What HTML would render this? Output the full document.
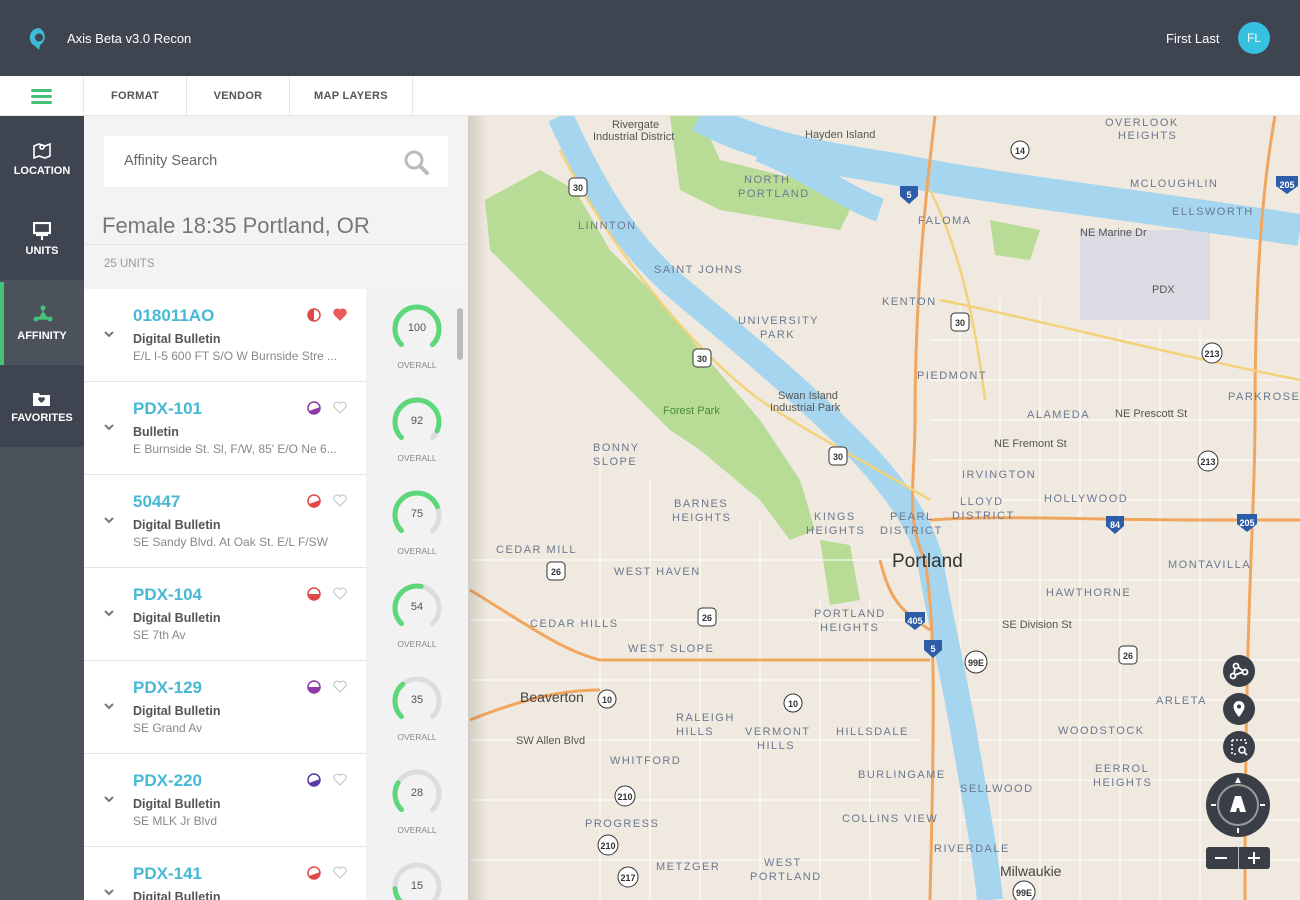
<!DOCTYPE html>
<html style="height:900px;overflow:hidden"><head><meta charset="utf-8"><style>
*{box-sizing:border-box;margin:0;padding:0}
body{width:1300px;height:900px;overflow:hidden;font-family:"Liberation Sans",sans-serif;background:#efe9df;position:relative}
.hdr{position:absolute;left:0;top:0;width:1300px;height:76px;background:#3f4550;color:#fff}
.tabs{position:absolute;left:0;top:76px;width:1300px;height:40px;background:#fff;border-bottom:1px solid #e4e4e4}
.tab{position:absolute;top:0;height:40px;border-right:1px solid #e6e6e6;font-size:11px;font-weight:bold;color:#555;line-height:40px;text-align:center;letter-spacing:.3px}
.side{position:absolute;left:0;top:116px;width:84px;height:784px;background:#4c525c;overflow:hidden}
.nav{position:absolute;left:0;width:84px;height:82px;background:#3f4550;color:#fff;font-size:11px;font-weight:bold;text-align:center}
.nav span{position:absolute;left:0;width:84px;top:49px}
.panel{position:absolute;left:84px;top:116px;width:384px;height:784px;background:#f3f3f3;overflow:hidden}
.item{position:absolute;left:0;width:384px;height:93px;background:#fff;border-bottom:1px solid #e5e5e5}
.item .sc{position:absolute;left:282px;top:0;width:102px;height:93px;background:#f2f2f2}
.id{position:absolute;left:49px;top:17px;font-size:17px;color:#45b9d4;font-weight:bold}
.ty{position:absolute;left:49px;top:43px;font-size:12.5px;color:#555;font-weight:bold}
.ad{position:absolute;left:49px;top:60px;font-size:12px;color:#888;white-space:nowrap}
.chev{position:absolute;left:20px;top:42px}
.ov{position:absolute;left:0;width:102px;top:71px;text-align:center;font-size:8.5px;color:#888}
.num{position:absolute;left:0;width:102px;top:33px;text-align:center;font-size:11px;color:#555}
.ring{position:absolute;left:25px;top:14px}
.lbl{font-family:"Liberation Sans",sans-serif;fill:#6b7890;font-size:11px;letter-spacing:1.5px}
.btn{position:absolute;width:32px;height:32px;border-radius:50%;background:#3a3f47}
</style></head><body>
<div class="hdr">
 <svg style="position:absolute;left:28px;top:27px" width="22" height="24" viewBox="0 0 22 24"><path d="M11 1a9.5 9.5 0 0 0-4 18l4 4 1-5A9.5 9.5 0 0 0 11 1z" fill="#3bbbd8"/><circle cx="11" cy="10.5" r="4" fill="#3f4550"/></svg>
 <div style="position:absolute;left:67px;top:31px;font-size:13px">Axis Beta v3.0 Recon</div>
 <div style="position:absolute;left:1166px;top:31px;font-size:13px">First Last</div>
 <div style="position:absolute;left:1238px;top:22px;width:32px;height:32px;border-radius:50%;background:#36c1e0;font-size:12px;line-height:32px;text-align:center">FL</div>
</div>
<div class="tabs">
 <div class="tab" style="left:0;width:84px"><div style="position:absolute;left:31px;top:13px;width:21px;height:3px;background:#45c27a;box-shadow:0 6px 0 #45c27a,0 12px 0 #45c27a;border-radius:2px"></div></div>
 <div class="tab" style="left:84px;width:103px">FORMAT</div>
 <div class="tab" style="left:187px;width:103px">VENDOR</div>
 <div class="tab" style="left:290px;width:123px">MAP LAYERS</div>
</div>
<div class="side">
 <div class="nav" style="top:0;height:82px"><svg style="position:absolute;left:33px;top:26px" width="18" height="17" viewBox="0 0 18 17" fill="none" stroke="#fff" stroke-width="1.6"><path d="M1 4l5-2 6 2 5-2v12l-5 2-6-2-5 2z"/><circle cx="9" cy="5" r="2"/></svg><span>LOCATION</span></div>
 <div class="nav" style="top:82px;height:82px"><svg style="position:absolute;left:33px;top:24px" width="18" height="18" viewBox="0 0 18 18"><rect x="1" y="1" width="16" height="10" fill="none" stroke="#fff" stroke-width="2.2"/><rect x="3" y="12" width="12" height="2" fill="#fff"/><rect x="8" y="13" width="2" height="5" fill="#fff"/></svg><span style="top:47px">UNITS</span></div>
 <div class="nav" style="top:166px;height:83px;background:#4c525c;border-left:4px solid #45c27a"><svg style="position:absolute;left:29px;top:23px" width="20" height="18" viewBox="0 0 20 18" fill="#45c27a"><circle cx="10" cy="3" r="2.5"/><circle cx="10" cy="10" r="2.5"/><circle cx="3" cy="14" r="2.5"/><circle cx="17" cy="14" r="2.5"/><path d="M10 3v7M3 14l7-4 7 4M3 14h14" stroke="#45c27a" stroke-width="1.3"/></svg><span style="left:-4px;top:48px">AFFINITY</span></div>
 <div class="nav" style="top:249px;height:82px"><svg style="position:absolute;left:33px;top:26px" width="17" height="15" viewBox="0 0 17 15"><path d="M0 2h6l1 2h10v11H0z" fill="#fff"/><path d="M8.5 12l-3-3a1.5 1.5 0 0 1 3-2 1.5 1.5 0 0 1 3 2z" fill="#3f4550"/></svg><span style="top:47px">FAVORITES</span></div>
</div>
<div class="panel">
 <div style="position:absolute;left:20px;top:20px;width:344px;height:51px;background:#fff"><div style="position:absolute;left:20px;top:17px;font-size:14.5px;color:#666">Affinity Search</div>
 <svg style="position:absolute;left:300px;top:14px" width="26" height="26" viewBox="0 0 26 26"><circle cx="10" cy="10" r="8" fill="none" stroke="#bbb" stroke-width="3"/><path d="M16 16l7 7" stroke="#bbb" stroke-width="4" stroke-linecap="round"/></svg></div>
 <div style="position:absolute;left:18px;top:97px;font-size:22px;color:#777">Female 18:35 Portland, OR</div>
 <div style="position:absolute;left:0;top:128px;width:384px;border-top:1px solid #e2e2e2"></div>
 <div style="position:absolute;left:20px;top:142px;font-size:11.5px;color:#999">25 UNITS</div>
 <div id="list"></div>
 <div style="position:absolute;left:373px;top:192px;width:6px;height:52px;border-radius:3px;background:#bbb"></div>
</div>
<svg style="position:absolute;left:468px;top:116px" width="832" height="784" viewBox="468 116 832 784">
 <rect x="468" y="116" width="832" height="784" fill="#efe9df"/>
 <defs><linearGradient id="sh" x1="0" x2="1"><stop offset="0" stop-color="#000" stop-opacity=".12"/><stop offset="1" stop-color="#000" stop-opacity="0"/></linearGradient></defs>
 <path d="M485 200 L540 170 L575 190 L610 250 L660 300 L700 350 L760 420 L800 480 L815 530 L790 540 L760 500 L700 450 L670 430 L640 400 L600 360 L560 320 L520 280 L490 250z" fill="#b8dc95"/>
 <path d="M670 116 L700 116 L720 160 L800 180 L860 190 L840 230 L780 220 L720 210 L680 190z" fill="#b8dc95"/>
 <path d="M990 220 L1040 230 L1030 260 L995 255z" fill="#b8dc95"/>
 <path d="M820 540 L850 545 L860 600 L830 605z" fill="#b8dc95"/>
 <rect x="1080" y="230" width="130" height="90" fill="#dcdbe3"/>
 <g stroke="#fff" stroke-width="1.5" opacity=".7">
  <path d="M960 300V900M1000 300V900M1040 300V900M1080 330V900M1120 330V900M1160 330V900M1200 330V900M600 450V900M650 480V900M700 500V900M760 520V900M820 600V900M870 600V900"/>
  <path d="M930 340H1300M930 380H1300M930 420H1300M930 460H1300M960 500H1300M960 580H1300M960 620H1300M960 660H1300M960 700H1300M960 740H1300M960 780H1300M960 820H1300M960 860H1300M470 560H920M470 620H920M470 680H920M470 740H920M470 800H920M470 860H920"/>
 </g>
 <path d="M560 116 C590 180 620 240 680 290 C740 340 800 390 850 440 C890 480 920 520 930 560 C940 620 955 680 965 740 C975 800 985 850 990 900" fill="none" stroke="#a6d6ef" stroke-width="26"/>
 <path d="M700 116 C760 150 840 160 900 170 C1000 190 1100 200 1300 230" fill="none" stroke="#a6d6ef" stroke-width="32"/>
 <path d="M760 150 C810 170 850 200 880 210" fill="none" stroke="#a6d6ef" stroke-width="24"/>
 <g fill="none" stroke="#f1a660" stroke-width="3">
  <path d="M935 116 C925 200 915 300 915 420 C915 480 905 520 925 560 C935 620 935 700 930 900"/>
  <path d="M1275 116 C1260 200 1255 300 1255 420 C1255 520 1245 600 1245 900"/>
  <path d="M930 520 C1000 515 1100 520 1200 520 L1300 520"/>
  <path d="M880 560 C890 600 900 610 930 630"/>
  <path d="M470 590 C520 620 560 650 600 660 L930 660"/>
  <path d="M470 720 C520 700 560 690 600 690"/>
 </g>
 <g fill="none" stroke="#f3d27a" stroke-width="2.5">
  <path d="M560 150 C600 230 680 340 760 400 C820 440 880 470 930 500"/>
  <path d="M940 300 C1040 320 1150 350 1300 380"/>
  <path d="M930 190 C960 250 975 320 985 400"/>
 </g>
 <path d="M468 116h20v784h-20z" fill="url(#sh)"/>
 <g class="lbl">
  <text x="744" y="183">NORTH</text><text x="738" y="197">PORTLAND</text>
  <text x="578" y="229">LINNTON</text><text x="654" y="273">SAINT JOHNS</text>
  <text x="738" y="324">UNIVERSITY</text><text x="760" y="338">PARK</text>
  <text x="882" y="305">KENTON</text><text x="918" y="224">FALOMA</text>
  <text x="917" y="379">PIEDMONT</text><text x="1027" y="418">ALAMEDA</text>
  <text x="962" y="478">IRVINGTON</text><text x="1044" y="502">HOLLYWOOD</text>
  <text x="593" y="451">BONNY</text><text x="593" y="465">SLOPE</text>
  <text x="674" y="507">BARNES</text><text x="672" y="521">HEIGHTS</text>
  <text x="814" y="520">KINGS</text><text x="806" y="534">HEIGHTS</text>
  <text x="890" y="520">PEARL</text><text x="880" y="534">DISTRICT</text>
  <text x="960" y="505">LLOYD</text><text x="952" y="519">DISTRICT</text>
  <text x="496" y="553">CEDAR MILL</text><text x="614" y="575">WEST HAVEN</text>
  <text x="530" y="627">CEDAR HILLS</text><text x="628" y="652">WEST SLOPE</text>
  <text x="814" y="617">PORTLAND</text><text x="820" y="631">HEIGHTS</text>
  <text x="1046" y="596">HAWTHORNE</text><text x="1168" y="568">MONTAVILLA</text>
  <text x="676" y="721">RALEIGH</text><text x="676" y="735">HILLS</text>
  <text x="745" y="735">VERMONT</text><text x="757" y="749">HILLS</text>
  <text x="836" y="735">HILLSDALE</text><text x="1058" y="734">WOODSTOCK</text>
  <text x="1156" y="704">ARLETA</text><text x="1095" y="772">EERROL</text><text x="1093" y="786">HEIGHTS</text>
  <text x="610" y="764">WHITFORD</text><text x="858" y="778">BURLINGAME</text>
  <text x="960" y="792">SELLWOOD</text><text x="842" y="822">COLLINS VIEW</text>
  <text x="585" y="827">PROGRESS</text><text x="934" y="852">RIVERDALE</text>
  <text x="764" y="866">WEST</text><text x="750" y="880">PORTLAND</text>
  <text x="656" y="870">METZGER</text>
  <text x="1105" y="126">OVERLOOK</text><text x="1118" y="139">HEIGHTS</text>
  <text x="1130" y="187">MCLOUGHLIN</text><text x="1172" y="215">ELLSWORTH</text>
  <text x="1228" y="400">PARKROSE</text>
 </g>
 <g font-family="Liberation Sans,sans-serif" font-size="11" fill="#555">
  <text x="612" y="128">Rivergate</text><text x="593" y="140">Industrial District</text>
  <text x="805" y="138">Hayden Island</text><text x="1080" y="236">NE Marine Dr</text>
  <text x="1152" y="293">PDX</text><text x="1115" y="417">NE Prescott St</text>
  <text x="994" y="447">NE Fremont St</text><text x="1002" y="628">SE Division St</text>
  <text x="778" y="399">Swan Island</text><text x="770" y="411">Industrial Park</text>
  <text x="663" y="414" fill="#4a8a3a">Forest Park</text>
  <text x="516" y="744">SW Allen Blvd</text>
  <text x="892" y="567" font-size="19" fill="#333">Portland</text>
  <text x="520" y="702" font-size="14" fill="#444">Beaverton</text>
  <text x="1000" y="876" font-size="14" fill="#444">Milwaukie</text>
 </g>
 <g font-family="Liberation Sans,sans-serif" font-size="9" font-weight="bold" fill="#333" text-anchor="middle">
  <g><rect x="569" y="178" width="18" height="18" rx="4" fill="#fff" stroke="#333"/><text x="578" y="191">30</text></g>
  <g><rect x="693" y="349" width="18" height="18" rx="4" fill="#fff" stroke="#333"/><text x="702" y="362">30</text></g>
  <g><rect x="829" y="447" width="18" height="18" rx="4" fill="#fff" stroke="#333"/><text x="838" y="460">30</text></g>
  <g><rect x="951" y="313" width="18" height="18" rx="4" fill="#fff" stroke="#333"/><text x="960" y="326">30</text></g>
  <g><rect x="547" y="562" width="18" height="18" rx="4" fill="#fff" stroke="#333"/><text x="556" y="575">26</text></g>
  <g><rect x="698" y="608" width="18" height="18" rx="4" fill="#fff" stroke="#333"/><text x="707" y="621">26</text></g>
  <g><rect x="1119" y="646" width="18" height="18" rx="4" fill="#fff" stroke="#333"/><text x="1128" y="659">26</text></g>
  <circle cx="1020" cy="150" r="9" fill="#fff" stroke="#333"/><text x="1020" y="154">14</text>
  <circle cx="1212" cy="353" r="10" fill="#fff" stroke="#333"/><text x="1212" y="357">213</text>
  <circle cx="1208" cy="461" r="10" fill="#fff" stroke="#333"/><text x="1208" y="465">213</text>
  <circle cx="607" cy="699" r="9" fill="#fff" stroke="#333"/><text x="607" y="703">10</text>
  <circle cx="793" cy="703" r="9" fill="#fff" stroke="#333"/><text x="793" y="707">10</text>
  <circle cx="625" cy="796" r="10" fill="#fff" stroke="#333"/><text x="625" y="800">210</text>
  <circle cx="608" cy="845" r="10" fill="#fff" stroke="#333"/><text x="608" y="849">210</text>
  <circle cx="628" cy="877" r="10" fill="#fff" stroke="#333"/><text x="628" y="881">217</text>
  <circle cx="976" cy="662" r="11" fill="#fff" stroke="#333"/><text x="976" y="666">99E</text>
  <circle cx="1024" cy="892" r="11" fill="#fff" stroke="#333"/><text x="1024" y="896">99E</text>
  <g fill="#fff"><path d="M900 186h18v10l-9 8-9-8z" fill="#2d5da8"/><text x="909" y="198">5</text>
  <path d="M924 640h18v10l-9 8-9-8z" fill="#2d5da8"/><text x="933" y="652">5</text>
  <path d="M905 612h20v10l-10 8-10-8z" fill="#2d5da8"/><text x="915" y="624">405</text>
  <path d="M1106 516h18v10l-9 8-9-8z" fill="#2d5da8"/><text x="1115" y="528">84</text>
  <path d="M1237 514h20v10l-10 8-10-8z" fill="#2d5da8"/><text x="1247" y="526">205</text>
  <path d="M1276 176h22v10l-11 8-11-8z" fill="#2d5da8"/><text x="1287" y="188">205</text></g>
 </g>
</svg>
<div class="btn" style="left:1223px;top:655px"><svg width="32" height="32" viewBox="0 0 32 32" fill="none" stroke="#fff" stroke-width="1.8"><circle cx="10" cy="21" r="2.5"/><circle cx="13" cy="11" r="2.5"/><circle cx="22" cy="17" r="2.5"/><path d="M11 19l1-6M15 12l5 4M12 20l8-3"/></svg></div>
<div class="btn" style="left:1223px;top:693px"><svg width="32" height="32" viewBox="0 0 32 32"><path d="M16 8a5.5 5.5 0 0 0-5.5 5.5C10.5 18 16 24 16 24s5.5-6 5.5-10.5A5.5 5.5 0 0 0 16 8z" fill="#fff"/><circle cx="16" cy="13.5" r="2" fill="#3a3f47"/></svg></div>
<div class="btn" style="left:1223px;top:731px"><svg width="32" height="32" viewBox="0 0 32 32" fill="none" stroke="#fff" stroke-width="1.6"><path d="M9 9h14v5M9 9v14h6" stroke-dasharray="2 2"/><circle cx="19" cy="19" r="3"/><path d="M21 21l3 3"/></svg></div>
<div style="position:absolute;left:1206px;top:773px;width:64px;height:64px;border-radius:50%;background:#3a3f47"><svg width="64" height="64" viewBox="0 0 64 64"><circle cx="32" cy="32" r="20" fill="none" stroke="#999" stroke-width="2"/><path d="M32 4l3 6h-6z" fill="#fff"/><path d="M5 32h5M54 32h5M32 55v5" stroke="#fff" stroke-width="2"/><path d="M29 23h6l5 16h-6l-1-4h-2l-1 4h-6z" fill="#fff"/></svg></div>
<div style="position:absolute;left:1206px;top:847px;width:64px;height:22px;border-radius:3px;background:#3a3f47"><div style="position:absolute;left:32px;top:0;width:1px;height:22px;background:#bbb"></div><div style="position:absolute;left:9px;top:10px;width:12px;height:2px;background:#fff"></div><div style="position:absolute;left:42px;top:10px;width:12px;height:2px;background:#fff"></div><div style="position:absolute;left:47px;top:5px;width:2px;height:12px;background:#fff"></div></div>
<script>
var d=[["018011AO","Digital Bulletin","E/L I-5 600 FT S/O W Burnside Stre ...",100,"#e04848",1,"M7 1v12a6 6 0 0 1 0-12z"],["PDX-101","Bulletin","E Burnside St. Sl, F/W, 85' E/O Ne 6...",92,"#8e3aa6",0,"M2 10A6 6 0 0 0 13 6z"],["50447","Digital Bulletin","SE Sandy Blvd. At Oak St. E/L F/SW",75,"#e04848",0,"M2 10A6 6 0 0 0 13 6z"],["PDX-104","Digital Bulletin","SE 7th Av",54,"#e04848",0,"M1 7h12a6 6 0 0 1-12 0z"],["PDX-129","Digital Bulletin","SE Grand Av",35,"#8e3aa6",0,"M1 7h12a6 6 0 0 1-12 0z"],["PDX-220","Digital Bulletin","SE MLK Jr Blvd",28,"#5a3aa6",0,"M2 10A6 6 0 0 0 13 6z"],["PDX-141","Digital Bulletin","",15,"#e04848",0,"M2 10A6 6 0 0 0 13 6z"]];
var h="";d.forEach(function(r,i){var t=173+i*93;var L=2*Math.PI*22*0.75;var f=L*r[3]/100;
h+='<div class="item" style="top:'+t+'px"><div class="id">'+r[0]+'</div><div class="ty">'+r[1]+'</div><div class="ad">'+r[2]+'</div>'+
'<svg class="chev" width="10" height="8" viewBox="0 0 10 8"><path d="M1 1l4 4 4-4" fill="none" stroke="#777" stroke-width="2"/></svg>'+
'<svg style="position:absolute;left:223px;top:19px" width="14" height="14" viewBox="0 0 14 14"><circle cx="7" cy="7" r="6" fill="#fff" stroke="'+r[4]+'" stroke-width="1.5"/><path d="'+r[6]+'" fill="'+r[4]+'"/></svg>'+
'<svg style="position:absolute;left:249px;top:19px" width="14" height="13" viewBox="0 0 14 13"><path d="M7 12L1.5 6.5A3.2 3.2 0 0 1 7 2.5a3.2 3.2 0 0 1 5.5 4z" fill="'+(r[5]?'#ea5a5a':'none')+'" stroke="'+(r[5]?'#ea5a5a':'#ccc')+'" stroke-width="1.3"/></svg>'+
'<div class="sc"><svg class="ring" width="52" height="52" viewBox="0 0 52 52"><circle cx="26" cy="26" r="22" fill="none" stroke="#ddd" stroke-width="5" stroke-dasharray="'+L+' 200" transform="rotate(135 26 26)" stroke-linecap="round"/><circle cx="26" cy="26" r="22" fill="none" stroke="#5cd87a" stroke-width="5" stroke-dasharray="'+f+' 200" transform="rotate(135 26 26)" stroke-linecap="round"/></svg><div class="num">'+r[3]+'</div><div class="ov">OVERALL</div></div></div>';});
document.getElementById("list").innerHTML=h;
</script>
</body></html>
